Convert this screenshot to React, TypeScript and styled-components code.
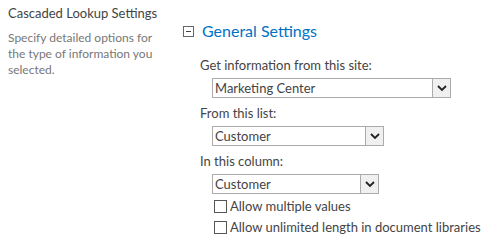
import React from 'react';
import styled, { createGlobalStyle } from 'styled-components';

const GlobalStyle = createGlobalStyle`
    body {
        margin: 0;
        background: #fff;
        font-family: "Lato", "Open Sans", sans-serif;
    }
`;

const Page = styled.div`
    display: flex;
    width: 502px;
    height: 245px;
    overflow: hidden;
`;

const Side = styled.div`
    width: 175px;
    padding: 4px 0 0 8px;
    box-sizing: border-box;
`;

const SideTitle = styled.div`
    font-size: 13px;
    color: #444;
    line-height: 18px;
`;

const SideText = styled.div`
    width: 158px;
    margin-top: 8px;
    font-size: 12px;
    color: #777;
    line-height: 16px;
`;

const Main = styled.div`
    flex: 1;
    padding: 20px 0 0 8px;
`;

const Header = styled.div`
    display: flex;
    align-items: center;
    gap: 8px;
`;

const Toggle = styled.span`
    width: 9px;
    height: 9px;
    border: 1px solid #666;
    display: flex;
    align-items: center;
    justify-content: center;
    &::after {
        content: '';
        width: 5px;
        height: 1px;
        background: #444;
    }
`;

const HeaderTitle = styled.div`
    font-size: 16px;
    color: #0072c6;
    line-height: 22px;
`;

const Fields = styled.div`
    padding-left: 17px;
    margin-top: 15px;
`;

const Label = styled.div`
    font-size: 13px;
    color: #444;
    line-height: 16px;
    margin-top: ${(p: { first?: boolean }) => (p.first ? '0' : '7px')};
`;

const Select = styled.div<{ w: number }>`
    display: flex;
    width: ${(p) => p.w}px;
    height: 20px;
    margin: 5px 0 0 12px;
    border: 1px solid #ababab;
    box-sizing: border-box;
    font-size: 13px;
    color: #444;
`;

const SelectValue = styled.div`
    flex: 1;
    padding-left: 2px;
    line-height: 18px;
`;

const Arrow = styled.div`
    width: 17px;
    border-left: 1px solid #ababab;
    background: #f0f0f0;
    display: flex;
    align-items: center;
    justify-content: center;
`;

const CheckRow = styled.label`
    display: flex;
    align-items: center;
    gap: 3px;
    margin: ${(p: { first?: boolean }) => (p.first ? '5px' : '7px')} 0 0 14px;
    font-size: 13px;
    color: #444;
    line-height: 14px;
`;

const Box = styled.span`
    width: 11px;
    height: 11px;
    border: 1px solid #555;
    background: #fff;
`;

const Chevron = () => (
    <svg width="10" height="7" viewBox="0 0 10 7">
        <path d="M1 1 L5 5 L9 1" fill="none" stroke="#222" strokeWidth="1.8" />
    </svg>
);

const Dropdown = ({ value, w }: { value: string; w: number }) => (
    <Select w={w}>
        <SelectValue>{value}</SelectValue>
        <Arrow><Chevron /></Arrow>
    </Select>
);

const App = () => {
    return (
        <>
            <GlobalStyle />
            <Page>
                <Side>
                    <SideTitle>Cascaded Lookup Settings</SideTitle>
                    <SideText>Specify detailed options for the type of information you selected.</SideText>
                </Side>
                <Main>
                    <Header>
                        <Toggle />
                        <HeaderTitle>General Settings</HeaderTitle>
                    </Header>
                    <Fields>
                        <Label first>Get information from this site:</Label>
                        <Dropdown value="Marketing Center" w={239} />
                        <Label>From this list:</Label>
                        <Dropdown value="Customer" w={172} />
                        <Label>In this column:</Label>
                        <Dropdown value="Customer" w={167} />
                        <CheckRow first><Box />Allow multiple values</CheckRow>
                        <CheckRow><Box />Allow unlimited length in document libraries</CheckRow>
                    </Fields>
                </Main>
            </Page>
        </>
    );
};

export default App;
